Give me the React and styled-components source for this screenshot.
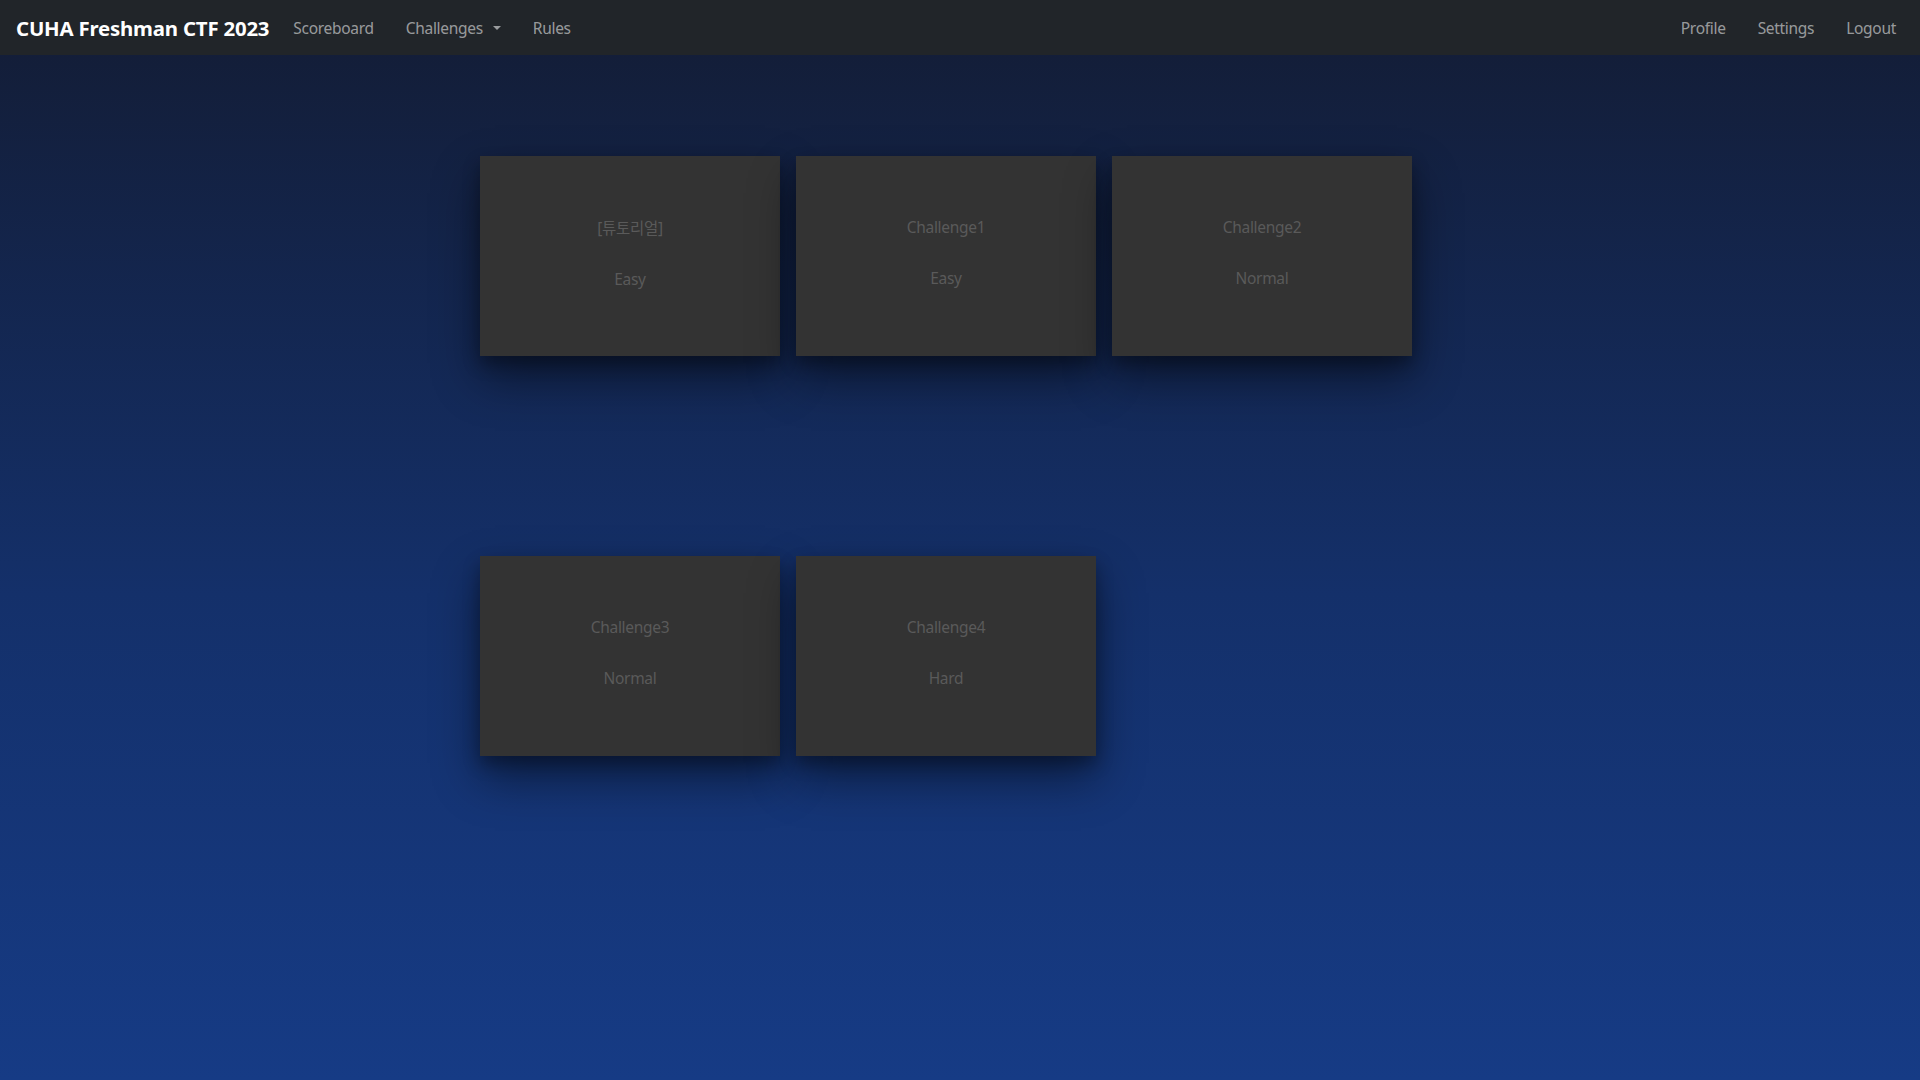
import React from "react";
import styled, { createGlobalStyle } from "styled-components";

const challenges = [
    [
        { name: "[튜토리얼]", level: "Easy" },
        { name: "Challenge1", level: "Easy" },
        { name: "Challenge2", level: "Normal" },
    ],
    [
        { name: "Challenge3", level: "Normal" },
        { name: "Challenge4", level: "Hard" },
    ],
];

const GlobalStyle = createGlobalStyle`
    html, body {
        margin: 0;
        padding: 0;
    }
    body {
        font-family: "Noto Sans", "Noto Sans CJK KR", sans-serif;
        background: #141d36;
    }
`;

const Page = styled.div`
    min-height: 100vh;
    display: flex;
    flex-direction: column;
    background: linear-gradient(180deg, #131c34 0%, #14306a 55%, #163b85 100%);
`;

const Navbar = styled.nav`
    height: 55px;
    display: flex;
    align-items: center;
    justify-content: space-between;
    padding: 0 8px 0 16px;
    background: #212529;
    box-sizing: border-box;
`;

const NavGroup = styled.div`
    display: flex;
    align-items: center;
`;

const Brand = styled.a`
    color: #fff;
    font-family: "Noto Sans", sans-serif;
    font-weight: 700;
    font-size: 20.4px;
    letter-spacing: -0.2px;
    margin-right: 8px;
    text-decoration: none;
`;

const NavLink = styled.a`
    color: rgba(255, 255, 255, 0.55);
    font-size: 15.5px;
    letter-spacing: -0.3px;
    padding: 8px 16px;
    text-decoration: none;
    display: flex;
    align-items: center;
    gap: 10px;
`;

const Caret = styled.span`
    width: 0;
    height: 0;
    border-left: 4px solid transparent;
    border-right: 4px solid transparent;
    border-top: 4.5px solid rgba(255, 255, 255, 0.55);
`;

const Board = styled.main`
    display: flex;
    flex-direction: column;
    gap: 200px;
    padding: 101px 0 0 480px;
`;

const Row = styled.div`
    display: flex;
    gap: 16px;
`;

const Card = styled.div`
    width: 300px;
    height: 200px;
    background: #333333;
    box-shadow: 0 22px 44px rgba(0, 0, 0, 0.45), 0 8px 16px rgba(0, 0, 0, 0.3);
    display: flex;
    flex-direction: column;
    align-items: center;
    padding-top: 60px;
    box-sizing: border-box;
    gap: 29px;
    color: #5a5a5a;
    font-size: 15.5px;
    letter-spacing: -0.3px;
`;

const App = () => {
    return (
        <>
            <GlobalStyle />
            <Page>
                <Navbar>
                    <NavGroup>
                        <Brand>CUHA Freshman CTF 2023</Brand>
                        <NavLink>Scoreboard</NavLink>
                        <NavLink>
                            Challenges <Caret />
                        </NavLink>
                        <NavLink>Rules</NavLink>
                    </NavGroup>
                    <NavGroup>
                        <NavLink>Profile</NavLink>
                        <NavLink>Settings</NavLink>
                        <NavLink>Logout</NavLink>
                    </NavGroup>
                </Navbar>
                <Board>
                    {challenges.map((row, i) => (
                        <Row key={i}>
                            {row.map((c) => (
                                <Card key={c.name}>
                                    <span>{c.name}</span>
                                    <span>{c.level}</span>
                                </Card>
                            ))}
                        </Row>
                    ))}
                </Board>
            </Page>
        </>
    );
};

export default App;
